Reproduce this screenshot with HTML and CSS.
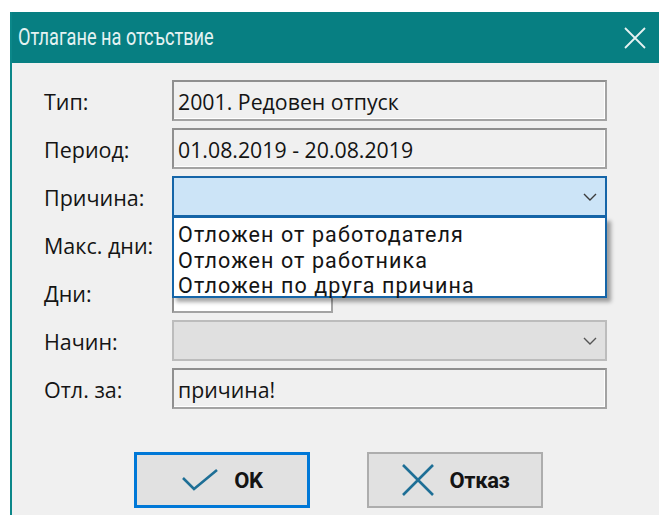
FILE: index.html
```html
<!DOCTYPE html>
<html lang="bg">
<head>
<meta charset="utf-8">
<title>Отлагане на отсъствие</title>
<link rel="stylesheet" href="styles.css">
</head>
<body>
<div class="window">
  <div class="titlebar">
    <span class="title">Отлагане на отсъствие</span>
    <svg class="close" width="22" height="22" viewBox="0 0 22 22">
      <path d="M1 1 L21 21 M21 1 L1 21" stroke="#e6f2f2" stroke-width="1.8" fill="none"/>
    </svg>
  </div>
  <div class="content">
    <div class="form">
      <div class="label">Тип:</div>
      <div class="field readonly">2001. Редовен отпуск</div>

      <div class="label">Период:</div>
      <div class="field readonly">01.08.2019 - 20.08.2019</div>

      <div class="label">Причина:</div>
      <div class="combo-wrap">
        <div class="combo active">
          <span></span>
          <svg class="chev" width="14" height="8" viewBox="0 0 14 8"><path d="M1 1 L7 7 L13 1" stroke="#3c3c3c" stroke-width="1.4" fill="none"/></svg>
        </div>
        <ul class="droplist">
          <li>Отложен от работодателя</li>
          <li>Отложен от работника</li>
          <li>Отложен по друга причина</li>
        </ul>
      </div>

      <div class="label">Макс. дни:</div>
      <div class="field short"></div>

      <div class="label">Дни:</div>
      <div class="field short white"></div>

      <div class="label">Начин:</div>
      <div class="combo disabled">
        <span></span>
        <svg class="chev" width="14" height="8" viewBox="0 0 14 8"><path d="M1 1 L7 7 L13 1" stroke="#555" stroke-width="1.4" fill="none"/></svg>
      </div>

      <div class="label">Отл. за:</div>
      <div class="field">причина!</div>
    </div>

    <div class="buttons">
      <button class="btn default">
        <svg width="38" height="24" viewBox="0 0 38 24"><path d="M2 10 L13 21 L36 2" stroke="#1e6f96" stroke-width="2.6" fill="none"/></svg>
        <span>OK</span>
      </button>
      <button class="btn">
        <svg width="34" height="34" viewBox="0 0 34 34"><path d="M2 2 L32 32 M32 2 L2 32" stroke="#1e6f96" stroke-width="2.6" fill="none"/></svg>
        <span>Отказ</span>
      </button>
    </div>
  </div>
</div>
</body>
</html>
```

FILE: styles.css
```css
html, body {
  margin: 0;
  padding: 0;
  background: #ffffff;
}

body {
  font-family: "Open Sans", "Noto Sans", sans-serif;
  color: #141414;
  overflow: hidden;
  height: 515px;
}

.window {
  margin: 12px 0 0 10px;
  border-left: 2px solid #0b8789;
  height: 503px;
  display: flex;
  flex-direction: column;
}

.titlebar {
  height: 51px;
  flex: none;
  background: #077f82;
  display: flex;
  align-items: center;
  justify-content: space-between;
  padding: 0 13px 0 6px;
}

.title {
  font-family: "Roboto", sans-serif;
  font-size: 23px;
  color: #e4f2f2;
  display: inline-block;
  transform: scaleX(0.79);
  transform-origin: left center;
}

.close {
  display: block;
}

.content {
  flex: 1;
  background: #f0f0f0;
  padding: 17px 0 0 32px;
}

.form {
  display: grid;
  grid-template-columns: 128px 435px;
  grid-auto-rows: 41px;
  row-gap: 7px;
  align-items: center;
}

.label {
  font-size: 21.5px;
  color: #141414;
  padding-top: 2px;
}

.field {
  height: 41px;
  box-sizing: border-box;
  border: 2px solid #8f8f8f;
  border-right-color: #a3a3a3;
  border-bottom-color: #a3a3a3;
  box-shadow: inset -1px -1px 0 #ffffff;
  background: #f0f0f0;
  font-size: 21.3px;
  padding: 1px 0 0 4px;
  display: flex;
  align-items: center;
  white-space: nowrap;
}

.field.short {
  width: 161px;
}

.field.white {
  background: #ffffff;
}

.combo-wrap {
  position: relative;
  height: 41px;
}

.combo {
  height: 41px;
  box-sizing: border-box;
  display: flex;
  align-items: center;
  justify-content: flex-end;
  padding-right: 8px;
}

.combo.active {
  background: #cce4f7;
  border: 2px solid #1565a8;
}

.combo.disabled {
  background: #e0e0e0;
  border: 2px solid #bcbcbc;
}

.chev {
  display: block;
}

.droplist {
  position: absolute;
  left: 0;
  top: 41px;
  width: 435px;
  height: 81px;
  box-sizing: border-box;
  margin: 0;
  padding: 4px 0 0;
  list-style: none;
  background: #ffffff;
  border: 2px solid #1565a8;
  border-top-width: 1px;
  box-shadow: 4px 4px 4px rgba(0, 0, 0, 0.35);
  z-index: 2;
}

.droplist li {
  font-family: "Roboto", sans-serif;
  font-size: 21.5px;
  line-height: 25.5px;
  height: 25.5px;
  padding-left: 4px;
  letter-spacing: 1.1px;
  color: #141414;
  white-space: nowrap;
}

.buttons {
  display: flex;
  gap: 57px;
  margin: 43px 0 0 90px;
}

.btn {
  width: 176px;
  height: 56px;
  box-sizing: border-box;
  background: #e1e1e1;
  border: 2px solid #adadad;
  font-family: "Roboto", sans-serif;
  font-weight: bold;
  font-size: 22px;
  letter-spacing: -0.4px;
  color: #141414;
  display: flex;
  align-items: center;
  justify-content: center;
  gap: 15px;
  padding: 0;
}

.btn.default {
  border: 2px solid #0078d7;
  box-shadow: inset 0 0 0 1px #0078d7;
}

.btn svg {
  display: block;
}
```
